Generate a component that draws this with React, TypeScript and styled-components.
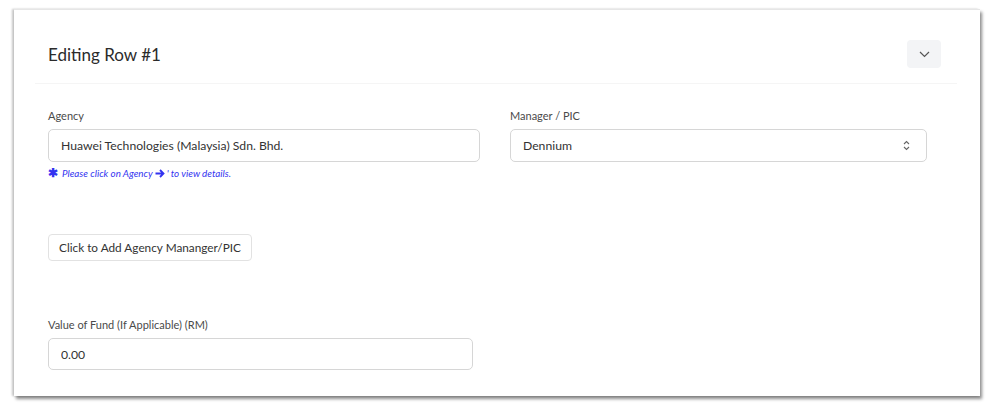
import React from "react";
import styled, { createGlobalStyle } from "styled-components";

const GlobalStyle = createGlobalStyle`
  html, body {
    margin: 0;
    padding: 0;
    background: #ffffff;
  }
  body {
    font-family: Lato, "Open Sans", "Liberation Sans", sans-serif;
    color: #333;
  }
`;

const Page = styled.div`
  padding: 9px 15px 20px 14px;
`;

const Card = styled.section`
  width: 966px;
  box-sizing: border-box;
  background: #fff;
  border-top: 1px solid #e6e6e6;
  padding: 0 23px 26px 21px;
  box-shadow: -2px 0 2px rgba(0, 0, 0, 0.22), 2px 3px 3px rgba(0, 0, 0, 0.45);
`;

const Header = styled.header`
  display: flex;
  align-items: center;
  justify-content: space-between;
  padding: 30px 16px 15px 13px;
  border-bottom: 1px solid #f5f5f5;
`;

const Title = styled.h2`
  margin: 0;
  font-size: 17px;
  font-weight: 400;
  color: #2b2b2b;
`;

const CollapseButton = styled.button`
  width: 34px;
  height: 28px;
  border: none;
  border-radius: 4px;
  background: #f3f4f6;
  display: flex;
  align-items: center;
  justify-content: center;
  padding: 0;
  color: #555;
`;

const Body = styled.div`
  padding: 25px 0 0 13px;
  display: flex;
  flex-direction: column;
`;

const Row = styled.div`
  display: flex;
  gap: 30px;
`;

const Field = styled.div<{ $width: number }>`
  width: ${(p) => p.$width}px;
  display: flex;
  flex-direction: column;
`;

const Label = styled.label`
  font-size: 11px;
  line-height: 14px;
  color: #4a4a4a;
  margin-bottom: 6px;
`;

const Input = styled.input<{ $height?: number }>`
  box-sizing: border-box;
  height: ${(p) => p.$height ?? 33}px;
  width: 100%;
  border: 1px solid #d6d6d6;
  border-radius: 5px;
  padding: 0 12px;
  font-family: inherit;
  font-size: 12.2px;
  color: #333;
  outline: none;
`;

const SelectBox = styled.div`
  box-sizing: border-box;
  height: 33px;
  border: 1px solid #d6d6d6;
  border-radius: 5px;
  padding: 0 16px 0 12px;
  display: flex;
  align-items: center;
  justify-content: space-between;
  font-size: 12.2px;
  color: #333;
`;

const Hint = styled.div`
  margin-top: 5px;
  font-size: 9.8px;
  line-height: 12px;
  font-style: italic;
  color: #3333f0;
  display: flex;
  align-items: center;
  gap: 2px;
`;

const Star = styled.span`
  font-style: normal;
  font-weight: 700;
  font-size: 12px;
  margin-right: 2px;
`;

const AddButton = styled.button`
  align-self: flex-start;
  margin-top: 55px;
  height: 27px;
  padding: 0 10px;
  background: #fff;
  border: 1px solid #e2e2e2;
  border-radius: 4px;
  font-family: inherit;
  font-size: 11.8px;
  color: #333;
`;

const FundField = styled(Field)`
  margin-top: 57px;
`;

const Chevron = () => (
  <svg width="11" height="7" viewBox="0 0 11 7" fill="none">
    <path d="M1 1l4.5 4.5L10 1" stroke="#555" strokeWidth="1.2" />
  </svg>
);

const UpDown = () => (
  <svg width="7" height="11" viewBox="0 0 7 11" fill="none">
    <path d="M1 4l2.5-2.5L6 4M1 7l2.5 2.5L6 7" stroke="#666" strokeWidth="1.1" />
  </svg>
);

const Arrow = () => (
  <svg width="10" height="9" viewBox="0 0 10 9" fill="none">
    <path d="M0.5 4.5h7.5M5 1l3.5 3.5L5 8" stroke="#3333f0" strokeWidth="1.8" />
  </svg>
);

export default function App() {
  return (
    <>
      <GlobalStyle />
      <Page>
        <Card>
          <Header>
            <Title>Editing Row #1</Title>
            <CollapseButton aria-label="Collapse">
              <Chevron />
            </CollapseButton>
          </Header>
          <Body>
            <Row>
              <Field $width={432}>
                <Label>Agency</Label>
                <Input defaultValue="Huawei Technologies (Malaysia) Sdn. Bhd." />
                <Hint>
                  <Star>✱</Star>
                  <span>Please click on Agency</span>
                  <Arrow />
                  <span>' to view details.</span>
                </Hint>
              </Field>
              <Field $width={417}>
                <Label>Manager / PIC</Label>
                <SelectBox>
                  <span>Dennium</span>
                  <UpDown />
                </SelectBox>
              </Field>
            </Row>
            <AddButton>Click to Add Agency Mananger/PIC</AddButton>
            <FundField $width={425}>
              <Label>Value of Fund (If Applicable) (RM)</Label>
              <Input $height={32} defaultValue="0.00" />
            </FundField>
          </Body>
        </Card>
      </Page>
    </>
  );
}
